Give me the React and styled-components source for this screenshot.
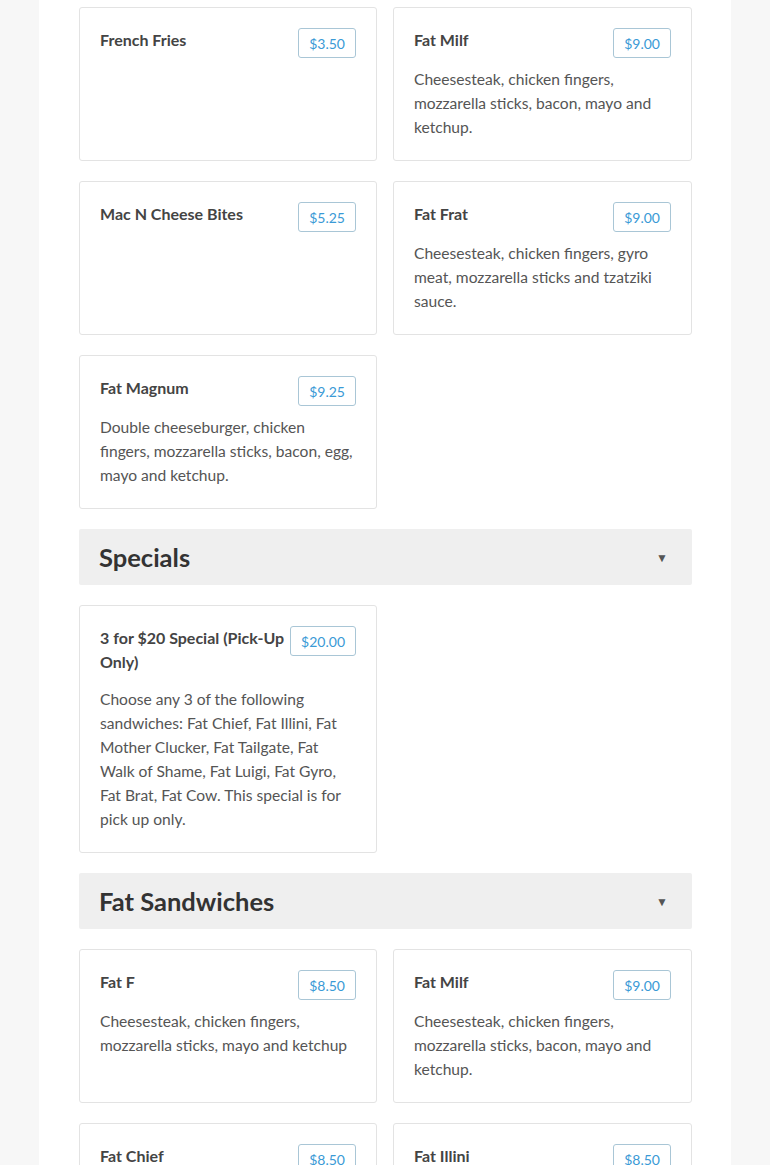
import React from "react";
import styled, { createGlobalStyle } from "styled-components";

const GlobalStyle = createGlobalStyle`
  html, body {
    margin: 0;
    padding: 0;
    background: #f7f7f7;
    font-family: Lato, "Open Sans", sans-serif;
  }
`;

const Panel = styled.main`
  width: 692px;
  margin-left: 39px;
  padding: 7px 39px 40px 40px;
  box-sizing: border-box;
  background: #fff;
  display: flex;
  flex-direction: column;
  row-gap: 20px;
`;

const Grid = styled.div`
  display: grid;
  grid-template-columns: 298px 299px;
  column-gap: 16px;
  row-gap: 20px;
`;

const Card = styled.div`
  border: 1px solid #e3e3e3;
  border-radius: 3px;
  padding: 20px 20px 21px 20px;
  background: #fff;
`;

const CardHeader = styled.div`
  display: flex;
  justify-content: space-between;
  align-items: flex-start;
  column-gap: 6px;

  .name {
    font-size: 16px;
    font-weight: bold;
    line-height: 24px;
    color: #444;
    margin-bottom: 13px;
  }
`;

const Price = styled.span`
  flex-shrink: 0;
  height: 30px;
  margin-bottom: 9px;
  box-sizing: border-box;
  padding: 1px 10px 0;
  display: flex;
  align-items: center;
  border: 1px solid #a9c6d6;
  border-radius: 3px;
  color: #3a9ad6;
  font-size: 14px;
  line-height: 1;
`;

const Description = styled.p`
  margin: 0;
  font-size: 15.6px;
  line-height: 24px;
  color: #555;
`;

const SectionHeader = styled.div`
  height: 56px;
  box-sizing: border-box;
  padding: 0 24px 0 20px;
  background: #efefef;
  border-radius: 2px;
  display: flex;
  align-items: center;
  justify-content: space-between;

  h2 {
    margin: 0;
    font-size: 25.5px;
    font-weight: bold;
    color: #333;
  }

  .caret {
    font-size: 12px;
    color: #555;
  }
`;

const MenuItem = ({ name, price, description }) => (
  <Card>
    <CardHeader>
      <div className="name">{name}</div>
      <Price>{price}</Price>
    </CardHeader>
    {description && <Description>{description}</Description>}
  </Card>
);

const sections = [
  {
    title: null,
    items: [
      { name: "French Fries", price: "$3.50" },
      {
        name: "Fat Milf",
        price: "$9.00",
        description: "Cheesesteak, chicken fingers, mozzarella sticks, bacon, mayo and ketchup.",
      },
      { name: "Mac N Cheese Bites", price: "$5.25" },
      {
        name: "Fat Frat",
        price: "$9.00",
        description: "Cheesesteak, chicken fingers, gyro meat, mozzarella sticks and tzatziki sauce.",
      },
      {
        name: "Fat Magnum",
        price: "$9.25",
        description:
          "Double cheeseburger, chicken fingers, mozzarella sticks, bacon, egg, mayo and ketchup.",
      },
    ],
  },
  {
    title: "Specials",
    items: [
      {
        name: "3 for $20 Special (Pick-Up Only)",
        price: "$20.00",
        description:
          "Choose any 3 of the following sandwiches: Fat Chief, Fat Illini, Fat Mother Clucker, Fat Tailgate, Fat Walk of Shame, Fat Luigi, Fat Gyro, Fat Brat, Fat Cow. This special is for pick up only.",
      },
    ],
  },
  {
    title: "Fat Sandwiches",
    items: [
      {
        name: "Fat F",
        price: "$8.50",
        description: "Cheesesteak, chicken fingers, mozzarella sticks, mayo and ketchup",
      },
      {
        name: "Fat Milf",
        price: "$9.00",
        description: "Cheesesteak, chicken fingers, mozzarella sticks, bacon, mayo and ketchup.",
      },
      {
        name: "Fat Chief",
        price: "$8.50",
        description: "Cheeseburger, chicken fingers, mozzarella sticks, fries, mayo and ketchup.",
      },
      {
        name: "Fat Illini",
        price: "$8.50",
        description: "Cheesesteak, gyro meat, mozzarella sticks, fries, tzatziki and ketchup.",
      },
    ],
  },
];

const App = () => (
  <>
    <GlobalStyle />
    <Panel>
      {sections.map((section, i) => (
        <React.Fragment key={i}>
          {section.title && (
            <SectionHeader>
              <h2>{section.title}</h2>
              <span className="caret">▼</span>
            </SectionHeader>
          )}
          <Grid>
            {section.items.map((item, j) => (
              <MenuItem key={j} {...item} />
            ))}
          </Grid>
        </React.Fragment>
      ))}
    </Panel>
  </>
);

export default App;
